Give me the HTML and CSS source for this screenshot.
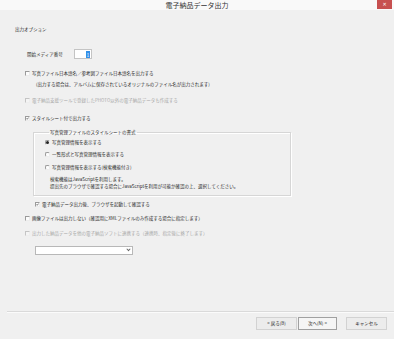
FILE: index.html
```html
<!DOCTYPE html>
<html lang="ja">
<head>
<meta charset="utf-8">
<title>電子納品データ出力</title>
<link rel="stylesheet" href="styles.css">
</head>
<body>
<div class="window">
  <div class="titlebar">
    <span></span>
    <span class="title">電子納品データ出力</span>
    <span class="close">✕</span>
  </div>
  <div class="content">
    <div class="row section-title">出力オプション</div>
    <div class="row field-row">
      <span class="field-label">開始メディア番号</span>
      <span class="spin"><span class="sel">1</span></span>
    </div>
    <div class="row check-row r-photo"><span class="cb"></span><span>写真ファイル日本語名／参考図ファイル日本語名を出力する</span></div>
    <div class="row note">(出力する場合は、アルバムに保存されているオリジナルのファイル名が出力されます)</div>
    <div class="row check-row disabled r-support"><span class="cb"></span><span>電子納品支援ツールで登録したPHOTO以外の電子納品データも作成する</span></div>
    <div class="row check-row r-style"><span class="cb checked"><svg viewBox="0 0 4 4" width="4" height="4"><path d="M0.6 2 L1.6 3 L3.4 0.8" fill="none" stroke="#333" stroke-width="0.9"/></svg></span><span>スタイルシート付で出力する</span></div>
    <fieldset class="group">
      <legend>写真管理ファイルのスタイルシートの書式</legend>
      <div class="row radio-row r1"><span class="rb on"></span><span>写真管理情報を表示する</span></div>
      <div class="row radio-row r2"><span class="rb"></span><span>一覧形式と写真管理情報を表示する</span></div>
      <div class="row radio-row r3"><span class="rb"></span><span>写真管理情報を表示する(検索機能付き)</span></div>
      <div class="desc">
        <div>検索機能はJavaScriptを利用します。</div>
        <div>提出先のブラウザで確認する場合にJavaScriptを利用が可能か確認の上、選択してください。</div>
      </div>
    </fieldset>
    <div class="row check-row sub r-browser"><span class="cb checked"><svg viewBox="0 0 4 4" width="4" height="4"><path d="M0.6 2 L1.6 3 L3.4 0.8" fill="none" stroke="#333" stroke-width="0.9"/></svg></span><span>電子納品データ出力後、ブラウザを起動して確認する</span></div>
    <div class="row check-row r-image"><span class="cb"></span><span>画像ファイルは出力しない（確認用にXMLファイルのみ作成する場合に指定します）</span></div>
    <div class="row check-row disabled r-link"><span class="cb"></span><span>出力した納品データを他の電子納品ソフトに連携する（連携時、指定後に終了します）</span></div>
    <div class="combo"><span class="arrow"></span></div>
  </div>
  <div class="separator"></div>
  <div class="buttons">
    <span class="btn">&lt; 戻る(B)</span>
    <span class="btn default">次へ(N) &gt;</span>
    <span class="btn cancel">キャンセル</span>
  </div>
</div>
</body>
</html>
```
FILE: styles.css
```css
* { box-sizing: border-box; }
html, body { margin: 0; padding: 0; background: #f0f0f0; }
body {
  font-family: "Noto Sans CJK JP", "Noto Sans", sans-serif;
  color: #2a2a2a;
}
.window {
  width: 394px;
  height: 339px;
  display: flex;
  flex-direction: column;
  background: #f0f0f0;
  overflow: hidden;
}
.titlebar {
  height: 10px;
  background: #f9f9f9;
  display: grid;
  grid-template-columns: 1fr auto 1fr;
  align-items: center;
}
.title {
  font-size: 7px;
  line-height: 10px;
  color: #333;
}
.close {
  justify-self: end;
  margin-right: 2px;
  width: 15px;
  height: 9px;
  align-self: start;
  background: #c75050;
  color: #fff;
  font-size: 5px;
  line-height: 9px;
  text-align: center;
  font-family: "DejaVu Sans", sans-serif;
}
.content {
  flex: 1;
  padding-left: 15px;
  display: flex;
  flex-direction: column;
  align-items: flex-start;
}
.row {
  font-size: 4.5px;
  line-height: 6px;
  height: 6px;
  white-space: nowrap;
  display: flex;
  align-items: center;
}
.section-title { margin-top: 16px; }
.field-row {
  margin-top: 17px;
  height: 10px;
  padding-left: 12px;
}
.field-label { width: 47px; }
.spin {
  width: 18px;
  height: 10px;
  background: #fff;
  border: 1px solid #c4c4c4;
  display: flex;
  justify-content: flex-end;
  align-items: center;
  padding-right: 1px;
}
.sel {
  background: #3390e8;
  color: #fff;
  font-size: 5px;
  line-height: 7px;
  width: 4px;
  text-align: center;
}
.check-row { padding-left: 10px; gap: 2px; }
.r-photo { margin-top: 11px; }
.note { margin-top: 5px; padding-left: 21px; }
.r-support { margin-top: 10px; }
.r-style { margin-top: 12px; }
.cb {
  width: 5px;
  height: 5px;
  background: #fcfcfc;
  border-top: 1px solid #9a9a9a;
  border-left: 1px solid #9a9a9a;
  border-right: 1px solid #ececec;
  border-bottom: 1px solid #ececec;
  flex: none;
  display: flex;
}
.cb svg { display: block; width: 3px; height: 3px; }
.disabled { color: #a8a8a8; }
.disabled .cb { border-color: #c4c4c4 #eeeeee #eeeeee #c4c4c4; background: #f4f4f4; }
.group {
  margin: 8px 0 0 18px;
  width: 258px;
  padding: 0 0 5px 11px;
  border: 1px solid #d6d6d6;
  box-shadow: inset 1px 1px 0 #fff, 1px 1px 0 #fff;
  display: flex;
  flex-direction: column;
  align-items: flex-start;
}
.group legend {
  font-size: 4.5px;
  line-height: 6px;
  padding: 0 1px;
  margin-left: 4px;
}
.radio-row { gap: 2px; }
.r1 { margin-top: 4px; }
.r2 { margin-top: 6px; }
.r3 { margin-top: 7px; }
.rb {
  width: 5px;
  height: 5px;
  background: #fcfcfc;
  border-top: 1px solid #9a9a9a;
  border-left: 1px solid #9a9a9a;
  border-right: 1px solid #ececec;
  border-bottom: 1px solid #ececec;
  border-radius: 2px;
  flex: none;
  display: flex;
  align-items: center;
  justify-content: center;
}
.rb.on::after {
  content: "";
  width: 3px;
  height: 3px;
  border-radius: 50%;
  background: #222;
}
.desc {
  margin-top: 6px;
  padding-left: 5px;
  font-size: 4.5px;
  line-height: 7px;
  white-space: nowrap;
}
.sub { padding-left: 20px; }
.r-browser { margin-top: 5px; }
.r-image { margin-top: 8px; }
.r-link { margin-top: 9px; }
.combo {
  margin: 10px 0 0 20px;
  width: 98px;
  height: 9px;
  background: #fff;
  border: 1px solid #b8b8b8;
  display: flex;
  justify-content: flex-end;
  align-items: center;
  padding-right: 2px;
}
.arrow {
  width: 3px;
  height: 3px;
  border-right: 1px solid #666;
  border-bottom: 1px solid #666;
  transform: rotate(45deg) translate(-1px, -1px);
}
.separator {
  margin-left: 7px;
  height: 2px;
  border-top: 1px solid #dadada;
  border-bottom: 1px solid #fbfbfb;
}
.buttons {
  display: flex;
  justify-content: flex-end;
  gap: 1px;
  padding: 4px 7px 9px 0;
}
.btn {
  height: 13px;
  width: 41px;
  font-size: 4.5px;
  line-height: 11px;
  text-align: center;
  background: #ececec;
  border: 1px solid #d2d2d2;
  white-space: nowrap;
}
.btn.default {
  width: 39px;
  background: #f5f5f5;
  border-color: #a0a0a0;
}
.btn.cancel { margin-left: 8px; }
```
